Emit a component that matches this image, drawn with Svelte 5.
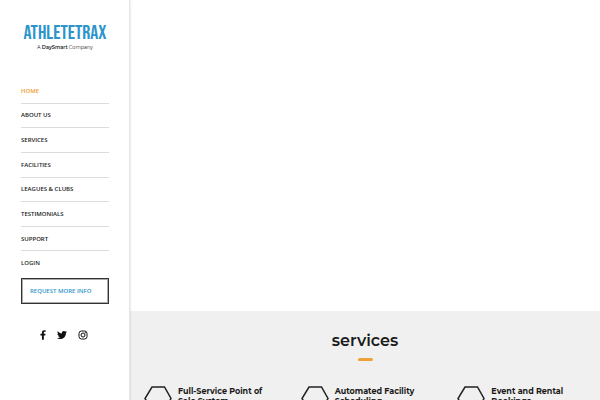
<script>
  const menu = [
    'Home',
    'About us',
    'Services',
    'Facilities',
    'Leagues & Clubs',
    'Testimonials',
    'Support',
    'Login'
  ];

  const services = [
    'Full-Service Point of Sale System',
    'Automated Facility Scheduling',
    'Event and Rental Bookings'
  ];

  let current = $state('Home');
</script>

<div class="page">
  <aside class="sidebar">
    <a class="logo" href="#home">
      <span class="logo-name">ATHLETETRAX</span>
      <span class="logo-tag">A <b>DaySmart</b> Company</span>
    </a>

    <nav>
      <ul class="menu">
        {#each menu as item}
          <li>
            <a href="#menu" class:active={item === current} onclick={() => (current = item)}>{item}</a>
          </li>
        {/each}
      </ul>
    </nav>

    <a class="request" href="#request">Request more info</a>

    <div class="social">
      <a href="#facebook" aria-label="Facebook">
        <svg width="6" height="10" viewBox="0 0 320 512">
          <path d="M279 288l14-93h-89v-60c0-25 12-50 52-50h41V7s-37-7-72-7c-73 0-121 44-121 125v70H23v93h81v224h100V288z" />
        </svg>
      </a>
      <a href="#twitter" aria-label="Twitter">
        <svg width="10" height="10" viewBox="0 0 512 512">
          <path d="M459 152c0 4 0 9 0 14 0 138-105 298-298 298-59 0-114-17-161-47 8 1 16 1 25 1 49 0 94-16 130-45-46-1-85-31-98-73 6 1 13 2 20 2 9 0 19-1 28-4-48-10-84-52-84-103v-1c14 8 30 13 47 13-28-19-47-51-47-87 0-19 5-37 14-53 52 64 129 105 216 110-2-8-3-16-3-24 0-58 47-105 105-105 30 0 57 13 77 33 24-5 46-13 66-25-8 24-24 45-46 58 21-2 42-8 60-16-14 21-32 39-52 54z" />
        </svg>
      </a>
      <a href="#instagram" aria-label="Instagram">
        <svg class="outline" width="10" height="10" viewBox="0 0 20 20">
          <rect x="2" y="2" width="16" height="16" rx="5" />
          <circle cx="10" cy="10" r="4" />
          <circle cx="14.5" cy="5.5" r="0.5" />
        </svg>
      </a>
    </div>
  </aside>

  <main>
    <section class="hero"></section>

    <section class="services">
      <h2>services</h2>
      <div class="grid">
        {#each services as service}
          <article>
            <svg width="28" height="25" viewBox="0 0 28 25">
              <path d="M8 1h12.500l6.500 11.500l-6.500 11.500H8L1 12.500z" />
            </svg>
            <h3>{service}</h3>
          </article>
        {/each}
      </div>
    </section>
  </main>
</div>

<style>
  :global(body) {
    margin: 0;
    background: #fff;
  }

  .page {
    display: flex;
    height: 100vh;
    overflow: hidden;
    color: #1a1a1a;
    font-family: 'Open Sans', sans-serif;
  }

  a {
    color: inherit;
    text-decoration: none;
  }

  .sidebar {
    box-sizing: border-box;
    flex: 0 0 130px;
    min-width: 0;
    padding: 22px 20px 0 21px;
    border-right: 1px solid #e6e6e6;
    box-shadow: 0 0 2px rgba(0, 0, 0, 0.2);
    z-index: 1;
  }

  .logo {
    display: flex;
    flex-direction: column;
    align-items: center;
    height: 57px;
    white-space: nowrap;
  }

  .logo-name {
    color: #2d95cb;
    font: 20px/22px 'Bebas Neue', Oswald, 'Roboto Condensed', sans-serif;
  }

  .logo-tag {
    font: 5px/6px Montserrat, sans-serif;
  }

  .logo-tag b {
    font-weight: 600;
  }

  .menu {
    display: grid;
    grid-template-rows: repeat(8, 1fr);
    height: 197px;
    margin: 0;
    padding: 0;
    list-style: none;
  }

  .menu li {
    display: flex;
    align-items: center;
    border-bottom: 1px solid #dcdcdc;
  }

  .menu li:last-child {
    border-bottom-color: transparent;
  }

  .menu a,
  .request {
    font-size: 6px;
    font-weight: 600;
    line-height: 8px;
    text-transform: uppercase;
  }

  .menu .active {
    color: #f09c2e;
  }

  .request {
    display: block;
    margin-top: 2px;
    padding: 8px;
    border: 1px solid #333;
    box-shadow: inset 0 0 0 1px #aaa;
    color: #2d95cb;
  }

  .social {
    display: flex;
    justify-content: center;
    gap: 11px;
    margin-top: 26px;
    padding-right: 2px;
  }

  .social svg {
    display: block;
    fill: #111;
  }

  .social .outline {
    fill: none;
    stroke: #111;
    stroke-width: 2;
  }

  main {
    flex: 1;
    min-width: 0;
  }

  .hero {
    height: 311px;
  }

  .services {
    min-height: 100px;
    padding-top: 20px;
    background: #f0f0f0;
    font-family: Montserrat, sans-serif;
  }

  h2 {
    margin: 0;
    font-size: 16px;
    font-weight: 600;
    line-height: 20px;
    text-align: center;
  }

  h2::after {
    content: '';
    display: block;
    width: 15px;
    height: 3px;
    margin: 7px auto 0;
    border-radius: 2px;
    background: #f0a03a;
  }

  .grid {
    display: grid;
    grid-template-columns: repeat(3, 1fr);
    margin-top: 25px;
  }

  article {
    display: flex;
    gap: 6px;
    padding: 0 15px 0 14px;
  }

  article svg {
    flex: none;
    fill: none;
    stroke: #222;
    stroke-width: 1.5;
  }

  h3 {
    margin: 0;
    font-size: 8px;
    font-weight: 700;
    line-height: 10px;
  }
</style>
